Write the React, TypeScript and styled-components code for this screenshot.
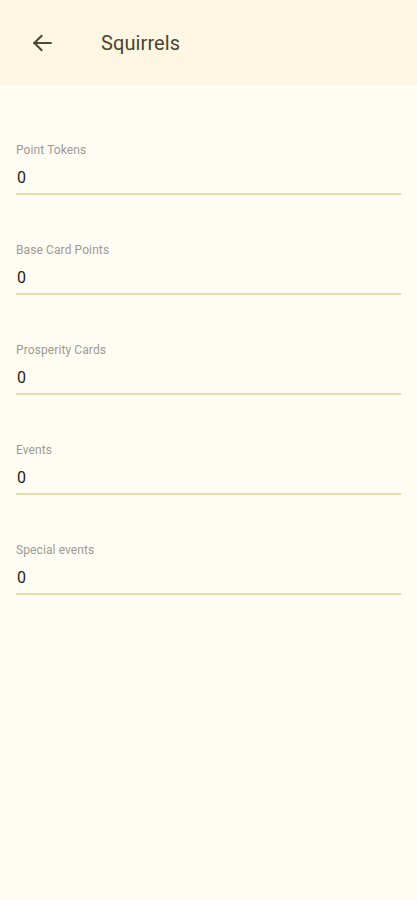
import React from "react";
import styled, { createGlobalStyle } from "styled-components";

const GlobalStyle = createGlobalStyle`
    html, body {
        margin: 0;
        padding: 0;
        background: #fffcf3;
        font-family: Roboto, "Liberation Sans", sans-serif;
    }
`

const Page = styled.div`
    width: 417px;
    min-height: 900px;
    background: #fffcf3;
    display: flex;
    flex-direction: column;
`

const Header = styled.header`
    height: 85px;
    background: #fdf6e3;
    display: flex;
    align-items: center;
    padding-left: 28px;
    box-sizing: border-box;
`

const BackButton = styled.button`
    width: 28px;
    height: 28px;
    padding: 0;
    border: none;
    background: transparent;
    display: flex;
    align-items: center;
    justify-content: center;
    color: #4b4836;
`

const Title = styled.h1`
    margin: 0 0 0 45px;
    font-size: 20px;
    font-weight: 400;
    color: #48452f;
    letter-spacing: 0.1px;
`

const Form = styled.div`
    padding: 57px 16px 0 16px;
    display: flex;
    flex-direction: column;
    gap: 47px;
`

const Field = styled.label`
    display: flex;
    flex-direction: column;
`

const FieldLabel = styled.span`
    font-size: 12px;
    line-height: 16px;
    color: #9d9a92;
    letter-spacing: 0.1px;
`

const FieldValue = styled.div`
    margin-top: 8px;
    padding: 0 0 3px 1px;
    font-size: 16px;
    line-height: 24px;
    color: #1f1d17;
    border-bottom: 2px solid #e9dbad;
`

const fields = [
    { label: "Point Tokens", value: 0 },
    { label: "Base Card Points", value: 0 },
    { label: "Prosperity Cards", value: 0 },
    { label: "Events", value: 0 },
    { label: "Special events", value: 0 },
];

export default function App() {
    return (
        <Page>
            <GlobalStyle />
            <Header>
                <BackButton aria-label="Back">
                    <svg width="26" height="26" viewBox="0 0 24 24" fill="none" stroke="currentColor" strokeWidth="1.9" strokeLinecap="square">
                        <path d="M20 12H5" />
                        <path d="M11.5 5.5L5 12l6.5 6.5" />
                    </svg>
                </BackButton>
                <Title>Squirrels</Title>
            </Header>
            <Form>
                {fields.map((f) => (
                    <Field key={f.label}>
                        <FieldLabel>{f.label}</FieldLabel>
                        <FieldValue>{f.value}</FieldValue>
                    </Field>
                ))}
            </Form>
        </Page>
    );
}
